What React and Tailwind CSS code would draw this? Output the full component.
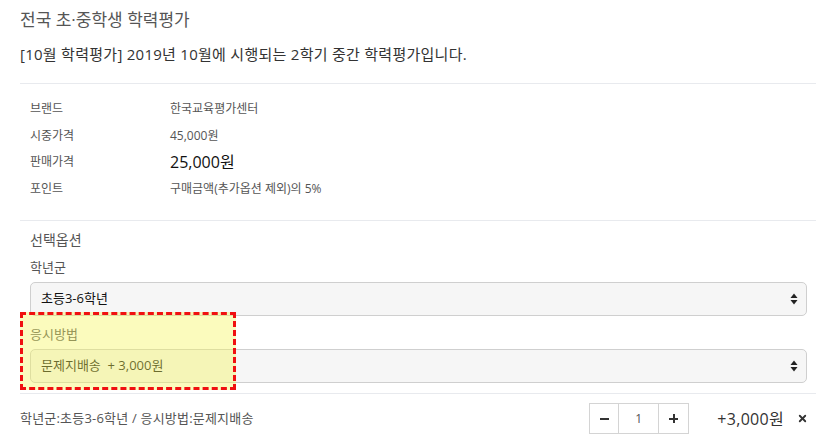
import { X } from 'lucide-react'

const FONT = { fontFamily: '"Open Sans", "Noto Sans CJK KR", sans-serif' }

function SelectArrow() {
  return (
    <svg width="8" height="12" viewBox="0 0 8 12" className="shrink-0">
      <path d="M4 0.5 L7.5 5 H0.5 Z" fill="#222" />
      <path d="M4 11.5 L7.5 7 H0.5 Z" fill="#222" />
    </svg>
  )
}

function FakeSelect({ value }) {
  return (
    <div className="flex h-[34px] w-[777px] items-center justify-between rounded-[5px] border border-[#cfcfcf] bg-[#f6f6f6] pl-[10px] pr-[8px]">
      <span className="whitespace-pre text-[13px] text-[#111]">{value}</span>
      <SelectArrow />
    </div>
  )
}

const info = [
  { label: '브랜드', value: '한국교육평가센터' },
  { label: '시중가격', value: '45,000원' },
  { label: '판매가격', value: '25,000원', big: true },
  { label: '포인트', value: '구매금액(추가옵션 제외)의 5%' },
]

export default function App() {
  return (
    <div className="h-[445px] w-[816px] overflow-hidden bg-white pl-5" style={FONT}>
      <h1 className="pt-[7px] text-[17px] leading-[26px] text-[#555]">전국 초·중학생 학력평가</h1>
      <p className="mt-[11px] text-[15px] leading-[20px] tracking-[0.27px] text-[#333]">
        [10월 학력평가] 2019년 10월에 시행되는 2학기 중간 학력평가입니다.
      </p>

      <div className="mt-[19px] border-t border-[#e8eaee] px-[10px] pt-[12px]">
        {info.map(row => (
          <div key={row.label} className="flex h-[26.5px] items-center">
            <span className="w-[140px] text-[12px] text-[#555]">{row.label}</span>
            {row.big
              ? <span className="text-[16px] text-[#111]">{row.value}</span>
              : <span className="text-[12px] text-[#555]">{row.value}</span>}
          </div>
        ))}
      </div>

      <div className="mt-[18px] border-t border-[#e8eaee] pl-[10px] pt-[9px]">
        <div className="text-[14px] leading-[20px] text-[#555]">선택옵션</div>
        <div className="mt-[7px] text-[13px] leading-[20px] text-[#555]">학년군</div>
        <div className="mt-[5px]"><FakeSelect value="초등3-6학년" /></div>

        <div className="relative">
          <div className="mt-[8px] text-[13px] leading-[20px] text-[#555]">응시방법</div>
          <div className="mt-[5px]"><FakeSelect value="문제지배송  + 3,000원" /></div>
          <div className="pointer-events-none absolute left-[-10px] top-[-12px] h-[78px] w-[216px] border-[3px] border-dashed border-[#f01010] bg-[#f6f65a]/40" />
        </div>
      </div>

      <div className="mt-[10px] flex h-[51px] items-center border-t border-[#e8eaee] pb-[1px]">
        <span className="flex-1 text-[13px] tracking-[0.2px] text-[#555]">학년군:초등3-6학년 / 응시방법:문제지배송</span>
        <div className="flex h-[31px] border border-[#d4d4d4]">
          <div className="flex w-[29px] items-center justify-center border-r border-[#d4d4d4]">
            <span className="h-[2px] w-[9px] bg-[#333]" />
          </div>
          <div className="flex w-[40px] items-center justify-center border-r border-[#d4d4d4] text-[12px] text-[#555]">1</div>
          <div className="relative flex w-[29px] items-center justify-center">
            <span className="absolute h-[2px] w-[9px] bg-[#333]" />
            <span className="absolute h-[9px] w-[2px] bg-[#333]" />
          </div>
        </div>
        <span className="ml-[28px] text-[16px] tracking-[0.3px] text-[#333]">+3,000원</span>
        <X className="ml-[13px] mr-[8px]" size={11} strokeWidth={4} color="#333" />
      </div>
    </div>
  )
}
